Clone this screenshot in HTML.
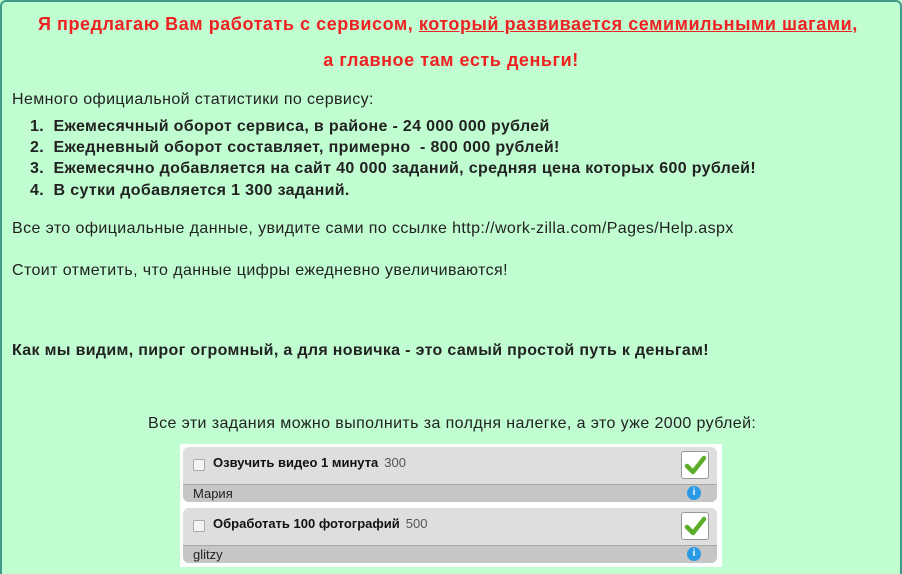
<!DOCTYPE html>
<html><head><meta charset="utf-8"><style>
html,body{margin:0;padding:0;background:#c0fdd0;width:902px;height:574px;overflow:hidden;}
body{position:relative;font-family:"Liberation Sans",sans-serif;color:#222;}
.frame{position:absolute;left:0;top:0;width:898px;height:590px;border:2px solid #3f9a87;border-radius:6px;}
.t{position:absolute;white-space:nowrap;font-size:16px;letter-spacing:0.4px;}
.red{color:#ee2222;font-weight:bold;font-size:18px;letter-spacing:0.55px;}
.b{font-weight:bold;letter-spacing:0.33px;}
.card{position:absolute;left:180px;width:542px;height:62px;background:#fff;}
.in{position:absolute;left:3px;top:3px;width:534px;height:55px;border-radius:6px;background:#dedede;overflow:hidden;}
.bar{position:absolute;left:0;bottom:0;width:100%;height:18px;background:#c6c6c6;border-top:1px solid #a8a8a8;font-size:13px;line-height:18px;padding-left:10px;box-sizing:border-box;}
.cb{position:absolute;left:10px;top:12px;width:10px;height:10px;border:1px solid #aaa;border-radius:2px;background:#f4f4f4;}
.tt{position:absolute;left:30px;top:8px;font-size:13px;font-weight:bold;color:#111;}
.tt span{font-weight:normal;color:#555;margin-left:6px;}
.ok{position:absolute;right:8px;top:4px;width:26px;height:26px;border:1px solid #999;border-radius:3px;background:#fff;}
.info{position:absolute;right:16px;bottom:2px;width:14px;height:14px;border-radius:50%;background:#2a9ae6;color:#fff;font-size:10px;line-height:14px;text-align:center;font-weight:bold;}
</style></head><body>
<div class="frame"></div>
<div class="t red" style="left:38px;top:14px;">Я предлагаю Вам работать с сервисом, <u>который развивается семимильными шагами,</u></div>
<div class="t red" style="left:0;width:902px;text-align:center;top:50px;">а главное там есть деньги!</div>
<div class="t" style="left:12px;top:91px;">Немного официальной статистики по сервису:</div>
<div class="t b" style="left:30px;top:118px;">1.&nbsp; Ежемесячный оборот сервиса, в районе - 24 000 000 рублей</div>
<div class="t b" style="left:30px;top:139px;">2.&nbsp; Ежедневный оборот составляет, примерно&nbsp; - 800 000 рублей!</div>
<div class="t b" style="left:30px;top:160px;">3.&nbsp; Ежемесячно добавляется на сайт 40 000 заданий, средняя цена которых 600 рублей!</div>
<div class="t b" style="left:30px;top:182px;">4.&nbsp; В сутки добавляется 1 300 заданий.</div>
<div class="t" style="left:12px;top:220px;">Все это официальные данные, увидите сами по ссылке http://work-zilla.com/Pages/Help.aspx</div>
<div class="t" style="left:12px;top:262px;">Стоит отметить, что данные цифры ежедневно увеличиваются!</div>
<div class="t b" style="left:12px;top:342px;">Как мы видим, пирог огромный, а для новичка - это самый простой путь к деньгам!</div>
<div class="t" style="left:148px;top:415px;">Все эти задания можно выполнить за полдня налегке, а это уже 2000 рублей:</div>
<div class="card" style="top:444px;"><div class="in"><div class="cb"></div><div class="tt">Озвучить видео 1 минута<span>300</span></div>
<div class="ok"><svg width="26" height="26" viewBox="0 0 26 26"><path d="M5 14 L11 20 L22 6" stroke="#5cae2a" stroke-width="4.5" fill="none" stroke-linecap="round" stroke-linejoin="round"/></svg></div>
<div class="bar">Мария</div><div class="info">i</div></div></div>
<div class="card" style="top:505px;"><div class="in"><div class="cb"></div><div class="tt">Обработать 100 фотографий<span>500</span></div>
<div class="ok"><svg width="26" height="26" viewBox="0 0 26 26"><path d="M5 14 L11 20 L22 6" stroke="#5cae2a" stroke-width="4.5" fill="none" stroke-linecap="round" stroke-linejoin="round"/></svg></div>
<div class="bar">glitzy</div><div class="info">i</div></div></div>
</body></html>
